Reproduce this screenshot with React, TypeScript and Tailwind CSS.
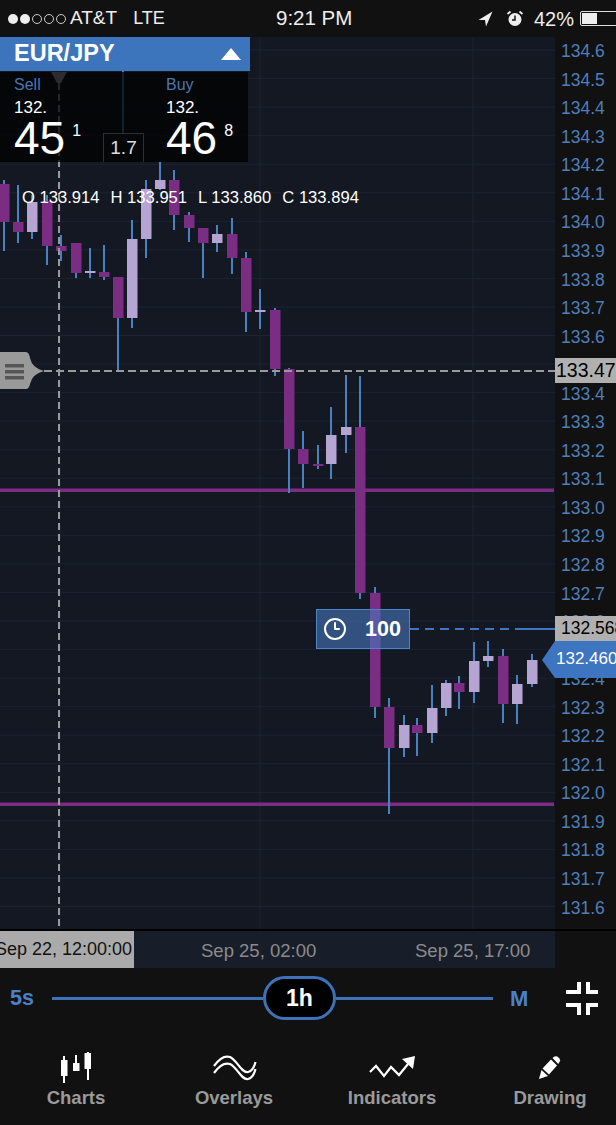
import { Clock3 } from 'lucide-react';

// x, wick top, wick bottom, body top, body bottom, light?
const candles: [number, number, number, number, number, boolean][] = [
  [4, 180, 251, 184, 222, false],
  [18, 185, 243, 222, 232, false],
  [32, 195, 239, 202, 232, true],
  [47, 195, 265, 201, 246, false],
  [61, 235, 261, 246, 251, false],
  [76, 243, 278, 243, 273, false],
  [90, 248, 278, 271, 273, true],
  [104, 245, 280, 272, 277, false],
  [118, 277, 371, 277, 318, false],
  [132, 220, 328, 239, 318, true],
  [146, 180, 258, 189, 239, true],
  [160, 162, 190, 180, 189, true],
  [174, 170, 230, 180, 215, false],
  [189, 212, 242, 215, 228, false],
  [203, 228, 278, 228, 243, false],
  [217, 225, 252, 234, 243, true],
  [232, 218, 274, 234, 258, false],
  [246, 252, 332, 258, 312, false],
  [260, 289, 329, 310, 312, true],
  [275, 308, 376, 310, 369, false],
  [289, 368, 493, 369, 449, false],
  [303, 431, 488, 449, 464, false],
  [318, 445, 469, 464, 466, false],
  [331, 407, 479, 435, 464, true],
  [346, 375, 453, 427, 435, true],
  [360, 376, 599, 427, 593, false],
  [375, 587, 718, 593, 707, false],
  [389, 698, 814, 707, 748, false],
  [404, 715, 757, 725, 748, true],
  [417, 718, 756, 725, 733, false],
  [432, 685, 743, 708, 733, true],
  [446, 680, 716, 683, 708, true],
  [459, 676, 709, 683, 692, false],
  [474, 642, 703, 661, 692, true],
  [488, 641, 667, 656, 661, true],
  [503, 649, 723, 656, 704, false],
  [517, 675, 724, 684, 704, true],
  [532, 654, 687, 660, 684, true],
];

const axisLabels = [
  '134.6', '134.5', '134.4', '134.3', '134.2', '134.1', '134.0', '133.9', '133.8', '133.7', '133.6',
  '133.5', '133.4', '133.3', '133.2', '133.1', '133.0', '132.9', '132.8', '132.7', '132.6', '132.5',
  '132.4', '132.3', '132.2', '132.1', '132.0', '131.9', '131.8', '131.7', '131.6',
];

function PriceChart() {
  return (
    <svg viewBox="0 37 555 892" className="w-[555px] h-[892px] shrink-0 block">
      {axisLabels.map((label, i) => (
        <line key={label} x1="0" x2="555" y1={50 + i * 28.55} y2={50 + i * 28.55} stroke="#1a2233" strokeWidth="1" />
      ))}
      <line x1="260" x2="260" y1="37" y2="929" stroke="#1a2233" />
      <line x1="473" x2="473" y1="37" y2="929" stroke="#1a2233" />
      <line x1="60" x2="60" y1="37" y2="929" stroke="#1a2233" />

      <line x1="123" x2="123" y1="37" y2="134" stroke="#4a7fc0" strokeWidth="2" />
      <rect x="0" y="488.5" width="554" height="3.5" fill="#7b2d84" />
      <rect x="0" y="802.5" width="554" height="3.5" fill="#7b2d84" />

      {candles.map(([x, wickTop, wickBottom, top, bottom, light]) => (
        <g key={x}>
          <rect x={x - 1} y={wickTop} width="2" height={wickBottom - wickTop} fill="#4a7fc0" />
          <rect x={x - 5} y={top} width="10.5" height={bottom - top} fill={light ? '#b6a5d3' : '#7b2d84'} />
        </g>
      ))}

      <line x1="59" x2="59" y1="72" y2="929" stroke="#9a9a9a" strokeWidth="2" strokeDasharray="7 4" />
      <line x1="44" x2="555" y1="371" y2="371" stroke="#9a9a9a" strokeWidth="2" strokeDasharray="8 4" />
      <line x1="410" x2="520" y1="629" y2="629" stroke="#3f78c0" strokeWidth="2" strokeDasharray="9 6" />
      <line x1="518" x2="555" y1="629" y2="629" stroke="#3f78c0" strokeWidth="2" />

      <path d="M0 352 H26 Q29 352 30 358 Q32 368 44 371 Q32 374 30 384 Q29 389 26 389 H0 Z" fill="#9a9a9a" />
      <rect x="5" y="364" width="19" height="3.5" fill="#565656" />
      <rect x="5" y="370" width="19" height="3.5" fill="#565656" />
      <rect x="5" y="376" width="19" height="3.5" fill="#565656" />
    </svg>
  );
}

function CandlesIcon() {
  return (
    <svg width="34" height="33" viewBox="59 1052 34 33" fill="white">
      <rect x="63" y="1056" width="2" height="27" />
      <rect x="61" y="1060" width="6.5" height="16" />
      <rect x="75" y="1055" width="2" height="10" />
      <rect x="73" y="1063" width="6.5" height="8" />
      <rect x="87" y="1052" width="2" height="28" />
      <rect x="84.5" y="1053" width="6.5" height="16" />
    </svg>
  );
}

function WavesIcon() {
  return (
    <svg width="46" height="33" viewBox="211 1052 46 33" fill="none" stroke="white" strokeWidth="2.2">
      <path d="M214 1066 C219 1059 224 1055 230 1057 C237 1060 241 1073 248 1072 C251 1071.5 254 1068 255.5 1062" />
      <path d="M214 1073 C219 1066 224 1062 230 1064 C237 1067 241 1080 248 1079 C251 1078.5 254 1075 255.5 1069" />
    </svg>
  );
}

function IndicatorsIcon() {
  return (
    <svg width="48" height="33" viewBox="368 1052 48 33" fill="none">
      <path d="M370 1072 L376 1066 L384 1076 L391 1067 L399 1075 L408 1064" stroke="white" strokeWidth="2.2" />
      <path d="M415 1056 L402 1059 L413 1069 Z" fill="white" />
    </svg>
  );
}

function PencilIcon() {
  return (
    <svg width="26" height="33" viewBox="538 1052 26 33" fill="white">
      <path d="M540 1079 L542.5 1070 L549 1076 Z" />
      <path d="M543.5 1068.5 L552 1059.5 L558 1065.5 L550 1074.5 Z" />
      <path d="M553.5 1058 L555.5 1056.5 Q557.5 1055.5 559.5 1057.5 L560.5 1058.5 Q562 1060.5 560.5 1062 L559.2 1064 Z" />
    </svg>
  );
}

const tabs = [
  { label: 'Charts', icon: <CandlesIcon /> },
  { label: 'Overlays', icon: <WavesIcon /> },
  { label: 'Indicators', icon: <IndicatorsIcon /> },
  { label: 'Drawing', icon: <PencilIcon /> },
];

function StatusBar() {
  return (
    <div className="h-[37px] flex items-center relative text-[#eeeeee] text-[19px] pl-[8px]">
      <div className="flex gap-[2px] items-center">
        <span className="w-[10px] h-[10px] rounded-full bg-[#eeeeee]" />
        <span className="w-[10px] h-[10px] rounded-full bg-[#eeeeee]" />
        <span className="w-[10px] h-[10px] rounded-full border border-[#cccccc]" />
        <span className="w-[10px] h-[10px] rounded-full border border-[#cccccc]" />
        <span className="w-[10px] h-[10px] rounded-full border border-[#cccccc]" />
      </div>
      <span className="ml-[4px]">AT&amp;T</span>
      <span className="ml-[16px] text-[18px]">LTE</span>
      <span className="absolute left-[276px] font-medium text-[20.5px]">9:21 PM</span>
      <div className="ml-auto flex items-center">
        <svg width="15" height="16" viewBox="0 0 15 16" fill="#eeeeee">
          <path d="M14.5 0.5 L0.5 9 H7 L8 15.5 Z" />
        </svg>
        <svg width="18" height="17" viewBox="0 0 18 17" className="ml-[13px]">
          <circle cx="9" cy="9.5" r="6.5" fill="#eeeeee" />
          <path d="M9 5.5 V10 H6" fill="none" stroke="#111111" strokeWidth="1.5" />
          <path d="M1.5 4 L4.5 1.5 M16.5 4 L13.5 1.5" stroke="#eeeeee" strokeWidth="1.8" />
        </svg>
        <span className="ml-[10px] text-[20px]">42%</span>
        <div className="ml-[6px] w-[38px] mr-[-2px] h-[15px] border border-[#dddddd] rounded-[2px] p-[1px]">
          <div className="w-[15px] h-full bg-[#eeeeee]" />
        </div>
      </div>
    </div>
  );
}

function QuoteHeader() {
  return (
    <div className="absolute left-0 top-0 w-[250px]">
      <div className="h-[34px] bg-[#3d75bd] flex items-center justify-between pl-[14px] pr-[9px]">
        <span className="text-white font-bold text-[23.5px]">EUR/JPY</span>
        <svg width="20" height="12" viewBox="0 0 20 12" fill="white">
          <path d="M10 0 L20 12 H0 Z" />
        </svg>
      </div>
      <div className="relative w-[248px] h-[90px] mt-px bg-black/75 grid grid-cols-2 pl-[14px] text-white">
        <div className="flex flex-col">
          <span className="text-[#4a76b0] text-[16px] leading-[22px] mt-[2px]">Sell</span>
          <span className="text-[17px] leading-[22px] mt-px">132.</span>
          <div className="flex items-start leading-none mt-[-4px]">
            <span className="text-[46px] leading-[46px]">45</span>
            <span className="text-[16px] ml-[7px] mt-[8px]">1</span>
          </div>
        </div>
        <div className="flex flex-col pl-[35px]">
          <span className="text-[#4a76b0] text-[16px] leading-[22px] mt-[2px]">Buy</span>
          <span className="text-[17px] leading-[22px] mt-px">132.</span>
          <div className="flex items-start leading-none mt-[-4px]">
            <span className="text-[46px] leading-[46px]">46</span>
            <span className="text-[16px] ml-[7px] mt-[8px]">8</span>
          </div>
        </div>
        <div className="absolute left-[103px] bottom-0 w-[41px] h-[29px] border border-b-0 border-[#2a2f3a] flex items-center justify-center text-[19px] text-[#dddddd]">
          1.7
        </div>
      </div>
    </div>
  );
}

export default function App() {
  return (
    <div
      className="w-[616px] h-[1125px] bg-[#111112] overflow-hidden flex flex-col"
      style={{ fontFamily: '"Liberation Sans", Arial, sans-serif' }}
    >
      <StatusBar />

      <div className="relative h-[892px] flex bg-[#141822]">
        <PriceChart />
        <div className="flex-1 bg-[#111112] pl-[6px] text-[#4f7fb8] text-[17.5px]">
          {axisLabels.map((label) => (
            <div key={label} className="h-[28.55px] flex items-center">{label}</div>
          ))}
        </div>

        <QuoteHeader />
        <svg width="16" height="11" viewBox="0 0 16 11" className="absolute left-[51px] top-[35px]">
          <path d="M0 0 H16 L10 11 H6 Z" fill="#2c2c2c" />
        </svg>

        <div className="absolute left-[22px] top-[151px] flex gap-[11px] text-white text-[16.6px] leading-5">
          <span>O 133.914</span>
          <span>H 133.951</span>
          <span>L 133.860</span>
          <span>C 133.894</span>
        </div>

        <div className="absolute left-[555px] top-[321px] w-[61px] h-[25px] bg-[#b0b0b0] overflow-hidden whitespace-nowrap text-black text-[19.5px] leading-[25px] pl-px">
          133.47
        </div>

        <div className="absolute left-[316px] top-[572px] w-[94px] h-[40px] bg-[#4678be]/60 border border-[#4a86c8] flex items-center pl-[6px] text-white">
          <Clock3 size={24} strokeWidth={2} />
          <span className="ml-[18px] font-bold text-[21.5px]">100</span>
        </div>

        <div className="absolute left-[555px] top-[579px] w-[61px] h-[25px] bg-[#b0b0b0] overflow-hidden whitespace-nowrap text-black text-[17.5px] leading-[25px] pl-[6px]">
          132.568
        </div>

        <div className="absolute left-[542px] top-[604px] w-[74px] h-[37px] overflow-hidden whitespace-nowrap">
          <svg width="74" height="37" viewBox="0 0 74 37" className="absolute inset-0">
            <path d="M0 19 L13 0 H74 V37 H13 Z" fill="#3d75c0" />
          </svg>
          <span className="absolute left-[14px] top-[8px] text-white text-[17px] leading-5">132.460</span>
        </div>
      </div>

      <div className="h-[2px] bg-black" />

      <div className="h-[37px] flex text-[#8b8b8b] text-[18.5px]">
        <div className="w-[555px] bg-[#181d2a] relative">
          <div className="absolute left-0 top-0 w-[134px] h-full bg-[#aaaaaa] text-[#111111] text-[18px] flex items-center justify-end pr-[2px] overflow-hidden whitespace-nowrap">
            Sep 22, 12:00:00
          </div>
          <span className="absolute left-[201px] top-[6px]">Sep 25, 02:00</span>
          <span className="absolute left-[415px] top-[6px]">Sep 25, 17:00</span>
        </div>
      </div>

      <div className="h-[60px] flex items-center pl-[10px]">
        <span className="w-[24px] text-[#4a80c8] font-bold text-[21.5px]">5s</span>
        <div className="w-[441px] ml-[18px] flex items-center">
          <div className="w-[211px] h-[3px] bg-[#3d72b8]" />
          <div className="w-[73px] h-[44px] shrink-0 rounded-[22px] border-[3px] border-[#3d72b8] bg-black flex items-center justify-center text-white font-bold text-[23px]">
            1h
          </div>
          <div className="flex-1 h-[3px] bg-[#3d72b8]" />
        </div>
        <span className="ml-[17px] text-[#4a80c8] font-bold text-[22px]">M</span>
        <svg width="34" height="34" viewBox="567 981 34 34" className="ml-[37px] shrink-0" fill="none" stroke="white" strokeWidth="4">
          <path d="M568 992 H581 V982" />
          <path d="M600 992 H590 V982" />
          <path d="M568 1005 H581 V1015" />
          <path d="M600 1005 H590 V1015" />
        </svg>
      </div>

      <div className="ml-[-3px] grid grid-cols-[158px_158px_158px_158px] mt-[24px]">
        {tabs.map((tab) => (
          <div key={tab.label} className="flex flex-col items-center text-[#9a9a9a] font-bold text-[18.5px] leading-[22px]">
            <div className="h-[33px] flex items-center">{tab.icon}</div>
            <span className="mt-[2px]">{tab.label}</span>
          </div>
        ))}
      </div>
    </div>
  );
}
